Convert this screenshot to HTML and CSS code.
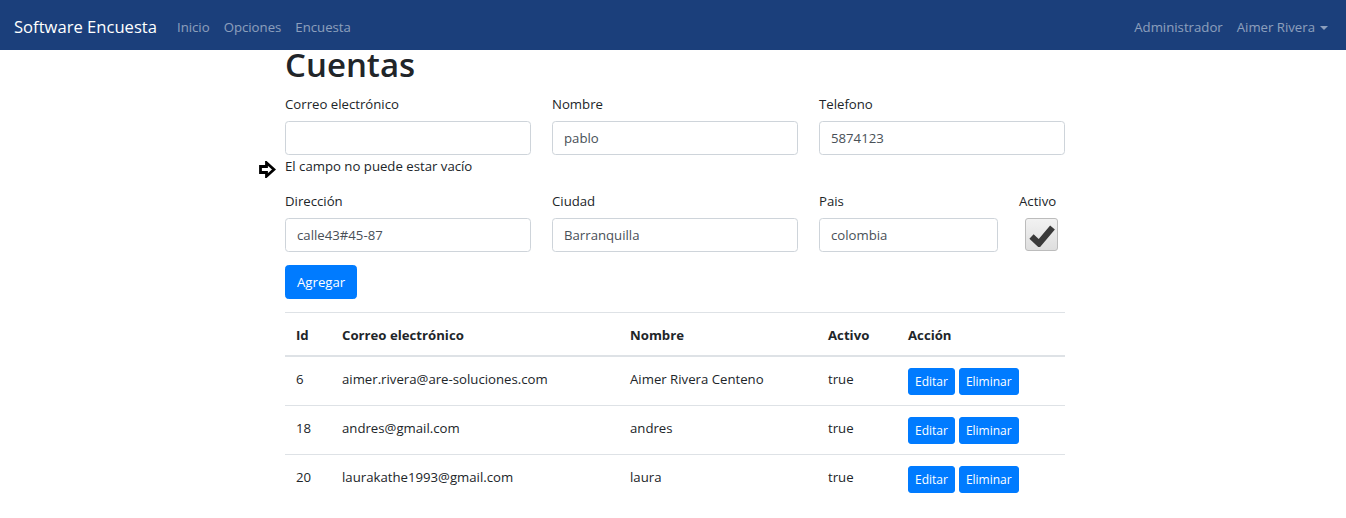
FILE: index.html
```html
<!DOCTYPE html>
<html lang="es">
<head>
<meta charset="utf-8">
<title>Software Encuesta</title>
<link rel="stylesheet" href="styles.css">
</head>
<body>
<nav class="navbar">
  <div class="nav-left">
    <a class="brand" href="#">Software Encuesta</a>
    <a class="nav-link" href="#">Inicio</a>
    <a class="nav-link" href="#">Opciones</a>
    <a class="nav-link" href="#">Encuesta</a>
  </div>
  <div class="nav-right">
    <a class="nav-link" href="#">Administrador</a>
    <a class="nav-link dropdown" href="#">Aimer Rivera<span class="caret"></span></a>
  </div>
</nav>
<main class="container">
  <h1 class="title">Cuentas</h1>
  <div class="row row-1">
    <div class="field">
      <label class="label">Correo electrónico</label>
      <input class="input" type="text" value="">
      <div class="error">
        <svg class="arrow" width="17" height="17" viewBox="0 0 17 17"><path d="M1.5 5.5 H7.5 V1.8 L15 8.5 L7.5 15.2 V11.5 H1.5 Z" fill="#fff" stroke="#000" stroke-width="2.8" stroke-linejoin="miter"/></svg>
        <span>El campo no puede estar vacío</span>
      </div>
    </div>
    <div class="field">
      <label class="label">Nombre</label>
      <input class="input" type="text" value="pablo">
    </div>
    <div class="field">
      <label class="label">Telefono</label>
      <input class="input" type="text" value="5874123">
    </div>
  </div>
  <div class="row row-2">
    <div class="field">
      <label class="label">Dirección</label>
      <input class="input" type="text" value="calle43#45-87">
    </div>
    <div class="field">
      <label class="label">Ciudad</label>
      <input class="input" type="text" value="Barranquilla">
    </div>
    <div class="field">
      <label class="label">Pais</label>
      <input class="input" type="text" value="colombia">
    </div>
    <div class="field">
      <label class="label">Activo</label>
      <div class="check">
        <svg width="26" height="24" viewBox="0 0 26 24"><path d="M2.5 13.5 L10 20.5 L23.5 4.5" fill="none" stroke="#3a3a3a" stroke-width="6.2" stroke-linejoin="miter"/></svg>
      </div>
    </div>
  </div>
  <button class="btn btn-add">Agregar</button>
  <table class="table">
    <colgroup>
      <col class="c-id"><col class="c-mail"><col class="c-name"><col class="c-act"><col class="c-acc">
    </colgroup>
    <thead>
      <tr><th>Id</th><th>Correo electrónico</th><th>Nombre</th><th>Activo</th><th>Acción</th></tr>
    </thead>
    <tbody>
      <tr><td>6</td><td>aimer.rivera@are-soluciones.com</td><td>Aimer Rivera Centeno</td><td>true</td><td><div class="actions"><button class="btn btn-sm">Editar</button><button class="btn btn-sm">Eliminar</button></div></td></tr>
      <tr><td>18</td><td>andres@gmail.com</td><td>andres</td><td>true</td><td><div class="actions"><button class="btn btn-sm">Editar</button><button class="btn btn-sm">Eliminar</button></div></td></tr>
      <tr><td>20</td><td>laurakathe1993@gmail.com</td><td>laura</td><td>true</td><td><div class="actions"><button class="btn btn-sm">Editar</button><button class="btn btn-sm">Eliminar</button></div></td></tr>
    </tbody>
  </table>
</main>
</body>
</html>
```

FILE: styles.css
```css
* { box-sizing: border-box; }
html, body { margin: 0; padding: 0; }
body {
  font-family: "Open Sans", "Noto Sans", sans-serif;
  font-size: 13.2px;
  line-height: 20px;
  color: #212529;
  background: #fff;
}
a { text-decoration: none; }

.navbar {
  height: 50px;
  background: #1b3f7b;
  display: flex;
  align-items: center;
  justify-content: space-between;
  padding: 3px 11px 0 14px;
}
.nav-left, .nav-right { display: flex; align-items: center; }
.brand {
  color: #fff;
  font-size: 16.6px;
  margin-right: 13px;
}
.nav-link {
  color: rgba(255,255,255,0.5);
  font-size: 13.2px;
  padding: 0 7px;
}
.caret {
  display: inline-block;
  width: 0; height: 0;
  margin-left: 5px;
  vertical-align: 2px;
  border-left: 4px solid transparent;
  border-right: 4px solid transparent;
  border-top: 4.5px solid rgba(255,255,255,0.5);
}

.container {
  width: 780px;
  margin-left: calc(50% - 388px);
}
.title {
  margin: 0;
  font-size: 33px;
  line-height: 30px;
  font-weight: 600;
  color: #212529;
}
.row {
  display: grid;
  column-gap: 21px;
}
.row-1 { grid-template-columns: 246px 246px 246px; margin-top: 14px; }
.row-2 { grid-template-columns: 246px 246px 179px 46px; margin-top: 15px; }
.field { display: flex; flex-direction: column; }
.label { display: block; margin-bottom: 7px; }
.input {
  height: 34px;
  width: 100%;
  border: 1px solid #ced4da;
  border-radius: 3.6px;
  padding: 0 11px;
  font-family: inherit;
  font-size: 13.2px;
  color: #495057;
  background: #fff;
  outline: none;
}
.error {
  display: flex;
  align-items: flex-start;
  height: 20px;
  margin-left: -26px;
  margin-top: 1px;
}
.arrow { margin-right: 9px; margin-top: 5px; flex: none; }
.check {
  width: 33px;
  height: 33px;
  margin-left: 6px;
  margin-top: 0;
  border: 1px solid #bcbcbc;
  border-radius: 3px;
  background: linear-gradient(#f2f2f2, #dedede);
  display: flex;
  align-items: center;
  justify-content: center;
}
.check svg { margin-top: 0; }

.btn {
  font-family: inherit;
  color: #fff;
  background: #007bff;
  border: 1px solid #007bff;
  cursor: pointer;
}
.btn-add {
  margin-top: 13px;
  height: 34px;
  padding: 0 11px;
  font-size: 13.2px;
  border-radius: 3.6px;
}
.table {
  margin-top: 13px;
  width: 100%;
  border-collapse: collapse;
  table-layout: fixed;
}
.c-id { width: 46px; }
.c-mail { width: 288px; }
.c-name { width: 198px; }
.c-act { width: 80px; }
.c-acc { width: 168px; }
.table th {
  text-align: left;
  font-weight: 700;
  padding: 11px 11px 9px;
  line-height: 22px;
  border-top: 1px solid #dee2e6;
  border-bottom: 2px solid #dee2e6;
}
.table td {
  vertical-align: top;
  padding: 11px 11px 10px;
  line-height: 22px;
}
.table tbody tr + tr td { border-top: 1px solid #dee2e6; }
.actions { display: flex; gap: 4px; }
.btn-sm {
  height: 27px;
  padding: 0 6px;
  font-size: 12px;
  border-radius: 3px;
  line-height: 1;
}
```
